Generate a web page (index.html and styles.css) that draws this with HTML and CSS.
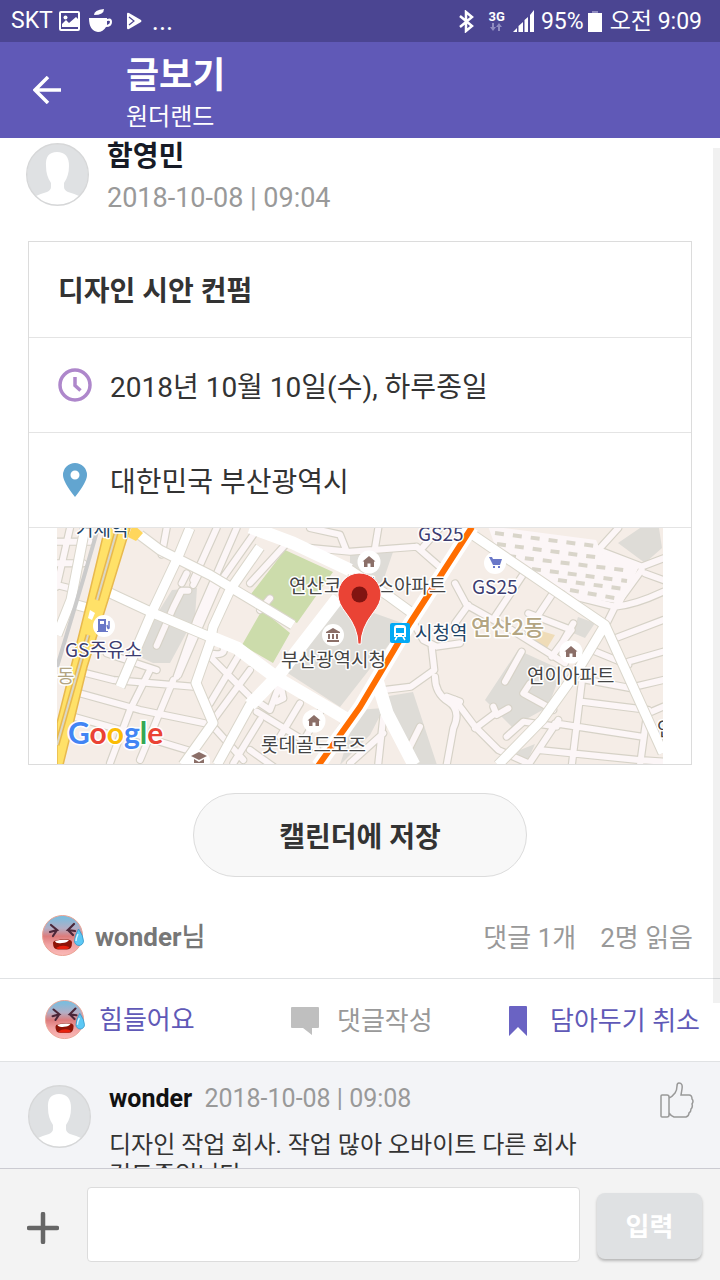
FILE: index.html
```html
<!DOCTYPE html>
<html lang="ko">

<head>
  <meta charset="UTF-8">
  <meta name="viewport" content="width=device-width, initial-scale=1">
  <title>글보기</title>
  <link rel="stylesheet" href="styles.css">
</head>

<body>
  <!-- shared icons -->
  <svg class="defs" width="0" height="0" aria-hidden="true">
    <defs>
      <linearGradient id="faceColor" x1="0" y1="0" x2="0" y2="1">
        <stop offset="0" stop-color="#72bfe2"/>
        <stop offset=".32" stop-color="#b3adc4"/>
        <stop offset=".52" stop-color="#dd7c7c"/>
        <stop offset=".72" stop-color="#f0a0a0"/>
        <stop offset="1" stop-color="#fbb9b7"/>
      </linearGradient>
      <symbol id="face" viewBox="0 0 42 42">
        <circle cx="20.500" cy="20.500" r="20" fill="url(#faceColor)" stroke="#eaa394"/>
        <path d="M9 10l6 5-7 2M15 15l-4 6M32 9l-6 6 7 1M26 15l5 5" fill="none" stroke="#4b2739" stroke-width="2.200" stroke-linecap="round"/>
        <path d="M11 28q0-2 3-2.500 7-2 12-1 4 .5 4 3 0 7-5 7H16q-5 0-5-6.500z" fill="#8d1407"/>
        <path d="M14 33q6-4 13-1 0 2-3 2h-7q-2 0-3-1z" fill="#e8200c"/>
        <path d="M13 26q7-2 14-1-2 3-7 3-6 1-7-2z" fill="#fff"/>
        <path d="M36.500 14q5 7 5 12a4.500 4.500 0 0 1-9 0q0-5 4-12z" fill="#5cc8f5" stroke="#3597c8" stroke-width=".8"/>
        <path d="M36 19q-2 4-2 7" fill="none" stroke="#d5f5ff" stroke-width="1.500"/>
      </symbol>
      <symbol id="person" viewBox="0 0 63 63">
        <circle cx="31.500" cy="31.500" r="30.500" fill="#dfe1e3"/>
        <path d="M10 53q4-2 11-4 4-2 4-5v-4q-5-7-5-17-1-14 11-14t12 14q0 10-5 17v4q0 3 4 5 7 2 11 4-9 9-22 9t-21-9z" fill="#fff"/>
        <circle cx="31.500" cy="31.500" r="30.800" fill="none" stroke="#d6d7d8" stroke-width="1.400"/>
      </symbol>
      <symbol id="house" viewBox="0 0 24 24">
        <circle cx="12" cy="12" r="11.500" fill="#fff"/>
        <path d="M12 6l6.500 5.500H17v5.500h-3.500v-3.500h-3V17H7v-5.500H5.500z" fill="#8b6f68"/>
      </symbol>
    </defs>
  </svg>

  <div class="statusbar">
    <div class="status-left">
      <span>SKT</span>
      <svg width="22" height="20" viewBox="0 0 22 20"><rect x="1" y="1" width="19" height="18" rx="1" fill="none" stroke="#fff" stroke-width="2"/><circle cx="6.500" cy="6.500" r="2" fill="#fff"/><path d="M3 16v-3l4-4 3 3 7-6 2 2v8z" fill="#fff"/></svg>
      <svg class="cup" width="24" height="24" viewBox="0 0 24 24"><path d="M0 9h18v1q5-2 5 3t-6 5q-3 5-8 5Q0 22 0 9z" fill="#fff"/><path d="M18 12q3-1 3 1t-3 3z" fill="#4b4592"/><path d="M5 6q0-5 10-6 0 6-10 6z" fill="#fff"/></svg>
      <svg class="play" width="16" height="18" viewBox="0 0 16 18"><path d="M1 2q0-2 2-1l12 7q1 1 0 2L3 17q-2 1-2-1z" fill="#fff"/><path d="M3 5l5 4-5 4" fill="none" stroke="#4b4592" stroke-width="1.200"/></svg>
      <span class="more">...</span>
    </div>
    <div class="status-right">
      <svg width="16" height="23" viewBox="0 0 16 23"><path d="M1 6l12 10-6 5V2l6 5L1 17" fill="none" stroke="#fff" stroke-width="2.500"/></svg>
      <div class="net">
        <b>3G</b>
        <svg width="14" height="8" viewBox="0 0 14 8"><path d="M3 0h2v4h2L4 8 1 4h2zM9 8h2V4h2l-3-4-3 4h2z" fill="#8f8bc0"/></svg>
      </div>
      <svg class="signal" width="22" height="22" viewBox="0 0 22 22"><path d="M0 22l4-4v4zM5.500 22v-6L10 12v10zM11.500 22V10L15 7v15zM17 22V5l4-5v22z" fill="#fff"/></svg>
      <span>95%</span>
      <svg class="battery" width="14" height="21" viewBox="0 0 14 21"><path d="M4 0h6v2H4z" fill="#8f8bc0"/><path d="M0 2h14v19H0z" fill="#fff"/></svg>
      <span>오전 9:09</span>
    </div>
  </div>

  <header class="appbar">
    <button class="back" type="button" aria-label="뒤로">
      <svg width="30" height="28" viewBox="0 0 30 28"><path d="M15 1L2 14l13 13M2 14h26" fill="none" stroke="#fff" stroke-width="3.500"/></svg>
    </button>
    <div class="titles">
      <h1>글보기</h1>
      <p>원더랜드</p>
    </div>
  </header>

  <main>
    <div class="post-head">
      <svg class="avatar"><use href="#person"/></svg>
      <div>
        <h2>함영민</h2>
        <time>2018-10-08 | 09:04</time>
      </div>
    </div>

    <section class="card">
      <h3>디자인 시안 컨펌</h3>
      <div class="row">
        <svg width="34" height="34" viewBox="0 0 34 34"><circle cx="17" cy="17" r="15" fill="none" stroke="#ae87cb" stroke-width="3.500"/><path d="M17 9v8.500l5.500 5" fill="none" stroke="#ae87cb" stroke-width="3.500"/></svg>
        <span>2018년 10월 10일(수), 하루종일</span>
      </div>
      <div class="row">
        <svg width="34" height="36" viewBox="0 0 34 36"><path d="M17 1a12 12 0 0 1 12 12q0 7-12 22Q5 20 5 13A12 12 0 0 1 17 1zm0 7.500a4.500 4.500 0 1 0 0 9 4.500 4.500 0 0 0 0-9z" fill="#62a5d0"/></svg>
        <span>대한민국 부산광역시</span>
      </div>

      <!-- map -->
      <svg class="map" viewBox="57 528 606 236">
        <defs>
          <g id="streets">
            <g transform="translate(50 520) scale(.3333)">
              <path d="M560 24L440 300 380 470M620 30L500 200 385 465M500 24L430 180M20 65l100 0M20 130h80M20 195l60 15M60 24L20 200M350 24l-15 80"/>
              <path d="M110 460l80 20 240 20M90 520l180 50 220 45M70 590l160 45 230 70M300 450l-60 120-60 160M170 400l60 20 90 30M370 480l-100 240M480 410l130 130M570 400l-90 150M600 450l-110 150M490 620l90 100M630 600l-80 130M520 380q10 30-40 20M395 190l15-30M430 195l15-30"/>
              <path d="M415 212h-20l-25 50-50 115"/>
            </g>
            <g transform="translate(250 520) scale(.3333)">
              <path d="M110 70L0 190M180 24l90 20 20 50M140 80l160 15 200-15M385 24l-10 60M500 80l80 70M520 80l50-56M480 290l40 70 40 20 70-10M545 380l8 70-70 50-80 10M555 470q0 50 40 75t15 80l-20 110M590 530l40 15"/>
              <path d="M90 490l-30 80-60-40M20 575l180 110M150 550L90 650M0 690l70 50M220 560l-70 120M290 600l-50 80M400 590l-15 140M300 730l100-90M95 510l5 25-20 10M30 270l30-35M510 620l-40 80"/>
            </g>
            <g transform="translate(455 520) scale(.3333)">
              <path d="M0 190l35 65 135 75 160 100M40 255L0 310M220 140L120 290M290 225l-70 105M220 280l130 50-60 80M355 310l-40 70M560 150l-80 110-30 60M480 260q60-5 145-45M430 90l130 50 65-25M570 160l55 20M430 90l60-66M320 220l160 40"/>
              <path d="M480 355l145-55M520 425l105-30M540 500l85-20M590 575l35-15M410 390l110 45M380 490l-30 250M380 545l200 25M300 610l260 40M250 690l300 30 75 5M575 590l-20 145M310 600l-90 135M370 475l160 30M0 540l60 80 70 70 90 40M60 625l60-45M115 560l10 25 35-20M155 650l50-45 100 15M200 395l-50 90M225 490l-20 30 90 50"/>
            </g>
          </g>
          <g id="roads">
            <path d="M140 535l20 15 50 25 50 30 33 20M110 593l43 20 57 24 27 11 40 30 68 40M190 528l-12 29-25 53-33 77M260 547l-30 43-17 37-3 16-14 40 17 40-30 42M338 598l-61 79-27 28-33 60M250 527l43 16 57 27 40 27 22 16M85 528l-14 72-14 35M70 603l25 7"/>
            <path d="M377 680l10 33 27 52M473 535l132 90 58 128M605 625l-27 45-36 50-44 45"/>
          </g>
        </defs>
        <rect x="57" y="528" width="606" height="236" fill="#f5ede7"/>
        <g fill="#dedcd7">
          <path d="M172 590l25-2-2 29-25 46-17 0-13-6 7-27zM337 600l68 24-65 83-57-37zM350 555l43-3-13 38-30-20zM383 697l30-5 24 73h-20zM357 710l27-2-14 27-30 30z"/>
          <path d="M618 543l22-15h19l3 20-17 15zM518 650l44 20-14 37-36 20-27-27zM578 617l17 6-10 15-12-5zM520 750l15-6-9 20-14-8z"/>
        </g>
        <path d="M538 630l17 5-8 13-17-6z" fill="#efdcb8"/>
        <path d="M285 550l48 22-36 51-49-25zM262 610l28 23-17 30-31-18z" fill="#ccdcab"/>
        <use href="#streets" class="street-edge"/>
        <use href="#streets" class="street"/>
        <path d="M488 526l108 14 6 14 38 10-18 40-48-8-76-42z" fill="#fcf6f7"/>
        <path d="M495 533l100 13M497 544l105 14M507 556l125 15M532 569l95 12M558 580l66 9M570 590l50 9" class="blocks"/>
        <use href="#roads" class="road-edge"/>
        <use href="#roads" class="road"/>
        <path d="M250 527l43 16 57 27M210 637l27 11 40 30 68 40M338 598l-61 79-27 28M377 680l10 33 27 52" class="avenue"/>
        <path d="M98 528L83 580 57 667" class="rail"/>
        <path d="M105 528h25l-22 72-21 67-24 98h-6v-42l30-120z" fill="#ffe168" stroke="#e8b94e" stroke-width="1.500"/>
        <path d="M117 530L97 600M88 635L57 745" stroke="#e8b94e" stroke-width="5"/>
        <path d="M117 530L97 600M88 635L57 745" stroke="#dbd7c6" stroke-width="2"/>
        <path d="M133 524l10 9-7 8-8-4z" fill="#ffd65c"/>
        <path d="M90 610l5 3-3 7-4-2z" fill="#fff"/>
        <path d="M472 527l-62 96-50 84-42 59" class="subway-edge"/>
        <path d="M472 527l-62 96-50 84-42 59" class="subway"/>

        <circle cx="104" cy="626" r="11" fill="#fff"/>
        <path d="M98 619h8v12h2v1H97v-1h1zM100 621v3h4v-3z" fill="#6a78c8" fill-rule="evenodd"/>
        <path d="M107 625q1 5 2 3v-7" fill="none" stroke="#6a78c8" stroke-width="1.500"/>
        <circle cx="495" cy="563" r="11" fill="#fff"/>
        <path d="M489 557h3l1 2h9l-2 6h-7zM493 566h2v2h-2zM498 566h2v2h-2z" fill="#6a78c8"/>
        <use href="#house" x="357" y="550" width="24" height="24"/>
        <use href="#house" x="302" y="709" width="24" height="24"/>
        <use href="#house" x="559" y="640" width="24" height="24"/>
        <circle cx="333" cy="635" r="11" fill="#fff"/>
        <path d="M326 632l7-4 7 4v1h-14zM328 634h2v5h-2zM332 634h2v5h-2zM336 634h2v5h-2zM327 640h12v2h-12z" fill="#8b6f68"/>
        <circle cx="199" cy="761" r="11" fill="#fff"/>
        <path d="M191 756l8-4 8 4-8 4zM194 759l5 3 5-3v4h-10z" fill="#8b6f68"/>
        <rect x="390" y="623" width="20" height="20" rx="2" fill="#03a9f4"/>
        <path d="M394 628q0-3 3-3h6q3 0 3 3v9h-12zM396 628v5h8v-5zM396 635h2v1h-2zM402 635h2v1h-2z" fill="#fff" fill-rule="evenodd"/>
        <path d="M397 637l-2 3M403 637l2 3" stroke="#fff" stroke-width="1.500"/>

        <g class="map-text">
          <text x="76" y="536" fill="#1e4466">거제역</text>
          <text x="418" y="541" fill="#3c3c70">GS25</text>
          <text x="472" y="594" fill="#3c3c70">GS25</text>
          <text x="65" y="657" fill="#3c3c70">GS주유소</text>
          <text x="289" y="593">연산코오롱스아파트</text>
          <text x="281" y="667">부산광역시청</text>
          <text x="415" y="640" fill="#1e4466">시청역</text>
          <text x="527" y="683">연이아파트</text>
          <text x="261" y="752">롯데골드로즈</text>
          <text x="657" y="736">연</text>
          <text x="57" y="683" class="area">동</text>
          <text x="471" y="635" class="area dong">연산2동</text>
        </g>
        <text x="68" y="744" class="google"><tspan fill="#4285f4">G</tspan><tspan fill="#ea4335">o</tspan><tspan fill="#fbbc05">o</tspan><tspan fill="#4285f4">g</tspan><tspan fill="#34a853">l</tspan><tspan fill="#ea4335">e</tspan></text>
        <path d="M359 573a21.500 21.500 0 0 1 22 22q0 8-8 18-12 15-12 31h-3q0-16-12-31-8-10-8-18a21.500 21.500 0 0 1 21-22z" fill="#ea4335" stroke="#fff" stroke-width="1"/>
        <circle cx="359.500" cy="594.500" r="8" fill="#811411"/>
      </svg>
    </section>

    <button class="save" type="button">캘린더에 저장</button>

    <div class="summary">
      <svg class="face"><use href="#face"/></svg>
      <strong>wonder<span>님</span></strong>
      <span class="count">댓글 1개</span>
      <span>2명 읽음</span>
    </div>

    <div class="actions">
      <button class="on" type="button"><svg class="face small"><use href="#face"/></svg>힘들어요</button>
      <button class="reply" type="button"><svg width="30" height="30" viewBox="0 0 30 30"><path d="M2 1h26q1 0 1 1v19q0 1-1 1h-6v7l-9-7H2q-1 0-1-1V2q0-1 1-1z" fill="#bfbfbf"/></svg>댓글작성</button>
      <button class="on keep" type="button"><svg width="20" height="32" viewBox="0 0 20 32"><path d="M2 1h16q1 0 1 1v29l-9-9-9 9V2q0-1 1-1z" fill="#6a63c3"/></svg>담아두기 취소</button>
    </div>

    <article class="comment">
      <svg class="avatar"><use href="#person"/></svg>
      <div class="comment-text">
        <p class="who"><b>wonder</b> <time>2018-10-08 | 09:08</time></p>
        <p>디자인 작업 회사. 작업 많아 오바이트 다른 회사 검토중입니다</p>
      </div>
      <button class="like" type="button" aria-label="좋아요">
        <svg width="34" height="36" viewBox="0 0 34 36"><path d="M1 14q0-1 1-1h5q2 0 2 2v18q0 2-2 2H2q-1 0-1-1zM9 16q3-1 6-5 2-3 2-7 0-3 2-3 4 0 3 6l-1 6h8q3 0 3 4 2 2 0 5 1 3-1 5 0 3-2 4 0 3-3 4H14q-3-1-5-4" fill="none" stroke="#999" stroke-width="1.500"/></svg>
      </button>
    </article>
    <div class="scrollbar"></div>
  </main>

  <form class="write">
    <button class="add" type="button" aria-label="첨부">
      <svg width="32" height="32" viewBox="0 0 32 32"><path d="M16 2v28M2 16h28" stroke="#666" stroke-width="4.500" stroke-linecap="round"/></svg>
    </button>
    <input type="text" name="comment" aria-label="댓글">
    <button class="send" type="submit">입력</button>
  </form>
</body>

</html>
```
FILE: styles.css
```css
* {
  box-sizing: border-box;
}

body {
  display: flex;
  flex-direction: column;
  height: 100vh;
  margin: 0;
  background: #fff;
  color: #333;
  font-family: Roboto, "Noto Sans CJK KR", sans-serif;
  font-size: 26px;
  line-height: 32px;
}

h1, h2, h3, p {
  margin: 0;
}

svg {
  display: block;
  flex: none;
}

button {
  padding: 0;
  border: none;
  background: none;
  color: inherit;
  font: inherit;
}

time {
  color: #999;
}

.defs {
  position: absolute;
}

/* status bar */
.statusbar {
  display: flex;
  flex: none;
  justify-content: space-between;
  height: 42px;
  padding: 0 18px 0 11px;
  background: #4b4592;
  color: #fff;
  font-size: 23px;
}

.status-left, .status-right {
  display: flex;
  align-items: center;
}

.status-left svg {
  margin-left: 6px;
}

.status-left .cup {
  margin-left: 8px;
}

.status-left .play {
  margin: 0 10px 0 13px;
}

.more {
  font-size: 27px;
}

.net {
  margin: 0 8px 0 14px;
  font-size: 13px;
  line-height: 12px;
}

.signal {
  margin-right: 6px;
}

.battery {
  margin: 0 8px 0 4px;
}

.status-right span {
  padding-top: 2px;
}

/* title bar */
.appbar {
  display: flex;
  flex: none;
  align-items: center;
  height: 96px;
  background: #6059b7;
  color: #fff;
}

.back {
  width: 126px;
  padding-left: 33px;
}

.titles {
  padding-top: 6px;
}

.appbar h1 {
  font-size: 36px;
  font-weight: 700;
  line-height: 48px;
}

.appbar p {
  font-size: 24px;
  line-height: 34px;
}

/* post */
main {
  position: relative;
  flex: 1;
  min-height: 0;
  overflow: hidden;
}

.avatar {
  width: 63px;
  height: 63px;
}

.post-head {
  display: flex;
  gap: 18px;
  height: 103px;
  padding-left: 26px;
}

.post-head .avatar {
  margin-top: 5px;
}

.post-head h2 {
  padding-top: 2px;
  color: #161b26;
  font-size: 28px;
  font-weight: 700;
  line-height: 34px;
}

.post-head time {
  display: block;
  font-size: 27px;
  line-height: 48px;
}

.card {
  margin: 0 28px;
  border: 1px solid #dcdcdc;
  font-size: 28px;
}

.card h3 {
  padding: 5px 29px 0;
  border-bottom: 1px solid #e4e4e4;
  font-size: 28px;
  font-weight: 700;
  line-height: 90px;
}

.row {
  display: flex;
  align-items: center;
  gap: 18px;
  padding: 0 29px;
  border-bottom: 1px solid #e4e4e4;
}

.row span {
  padding-top: 6px;
  line-height: 88px;
}

/* map */
.map {
  width: calc(100% - 56px);
  margin: 0 28px;
}

.street-edge, .street, .road-edge, .road, .avenue, .rail, .subway, .subway-edge, .blocks {
  fill: none;
  stroke-linejoin: round;
}

.street-edge {
  stroke: #d6d2c7;
  stroke-width: 25px;
  stroke-linecap: round;
}

.street {
  stroke: #fcf6f7;
  stroke-width: 18px;
  stroke-linecap: round;
}

.road-edge {
  stroke: #dad6cb;
  stroke-width: 11px;
}

.road {
  stroke: #fff;
  stroke-width: 9px;
}

.avenue {
  stroke: #fff;
  stroke-width: 13px;
}

.rail {
  stroke: #cbcbcb;
  stroke-width: 4px;
}

.subway-edge {
  stroke: #fff;
  stroke-width: 14px;
}

.subway {
  stroke: #ff6d00;
  stroke-width: 6px;
}

.blocks {
  stroke: #d9d5ca;
  stroke-width: 4px;
  stroke-dasharray: 9px 9px;
}

.map-text {
  fill: #444;
  stroke: #fff;
  stroke-width: 3px;
  stroke-linejoin: round;
  paint-order: stroke;
  font-family: "Noto Sans CJK KR", sans-serif;
  font-size: 19px;
}

.area {
  fill: #b3a582;
}

.dong {
  font-size: 22px;
  font-weight: 500;
}

.google {
  stroke: #fff;
  stroke-width: 3px;
  paint-order: stroke;
  font-family: Lato, sans-serif;
  font-size: 30px;
  font-weight: 700;
}

/* buttons under the card */
.save {
  display: block;
  width: 334px;
  height: 84px;
  margin: 28px auto 0;
  padding-top: 5px;
  border: 1px solid #dcdcdc;
  border-radius: 42px;
  background: #f8f8f8;
  font-size: 28px;
  font-weight: 700;
}

.face {
  width: 42px;
  height: 42px;
}

.face.small {
  width: 40px;
  height: 40px;
}

.summary {
  display: flex;
  align-items: center;
  height: 102px;
  padding: 16px 27px 0 42px;
  border-bottom: 1px solid #e0e2e4;
  color: #999;
}

.summary > span {
  padding-top: 4px;
}

.summary strong {
  margin-left: 11px;
  padding-top: 2px;
  color: #777;
}

.summary strong span {
  font-weight: 500;
}

.count {
  margin: 0 24px 0 auto;
}

.actions {
  display: flex;
  align-items: center;
  justify-content: space-between;
  height: 83px;
  padding: 0 20px 0 45px;
  border-bottom: 1px solid #e0e2e4;
  color: #999;
}

.actions button {
  display: flex;
  align-items: center;
  gap: 14px;
}

.actions .on {
  color: #6059b7;
}

.actions .reply {
  gap: 17px;
  margin-left: 20px;
  padding-top: 2px;
}

.actions .keep {
  gap: 22px;
  padding-top: 2px;
}

/* comment */
.comment {
  display: flex;
  gap: 18px;
  padding: 20px 26px 20px 28px;
  background: #f3f4f7;
  font-size: 24px;
  line-height: 30px;
}

.comment .avatar {
  margin-top: 3px;
}

.comment-text {
  width: 490px;
  padding-top: 2px;
}

.who {
  margin-bottom: 16px;
  font-size: 25px;
}

.who b {
  margin-right: 6px;
  color: #111;
}

.like {
  align-self: flex-start;
  margin-left: auto;
}

.scrollbar {
  position: absolute;
  top: 10px;
  right: 0;
  width: 7px;
  height: 855px;
  background: rgba(0, 0, 0, 0.055);
}

/* comment input */
.write {
  display: flex;
  flex: none;
  align-items: center;
  height: 112px;
  padding: 0 18px 0 27px;
  border-top: 1px solid #cbcbd2;
  background: #f3f3f3;
}

.add {
  padding-top: 6px;
}

.write input {
  flex: 1;
  min-width: 0;
  height: 75px;
  margin: 0 17px 0 28px;
  padding: 0 16px;
  border: 1px solid #dcdcdc;
  border-radius: 4px;
  background: #fff;
  font: inherit;
}

.send {
  width: 105px;
  height: 66px;
  margin-top: 2px;
  padding-top: 3px;
  border-radius: 8px;
  background: #dfe1e3;
  box-shadow: 0 2px 3px rgba(0, 0, 0, 0.25);
  color: #fff;
  font-weight: 700;
}
```
